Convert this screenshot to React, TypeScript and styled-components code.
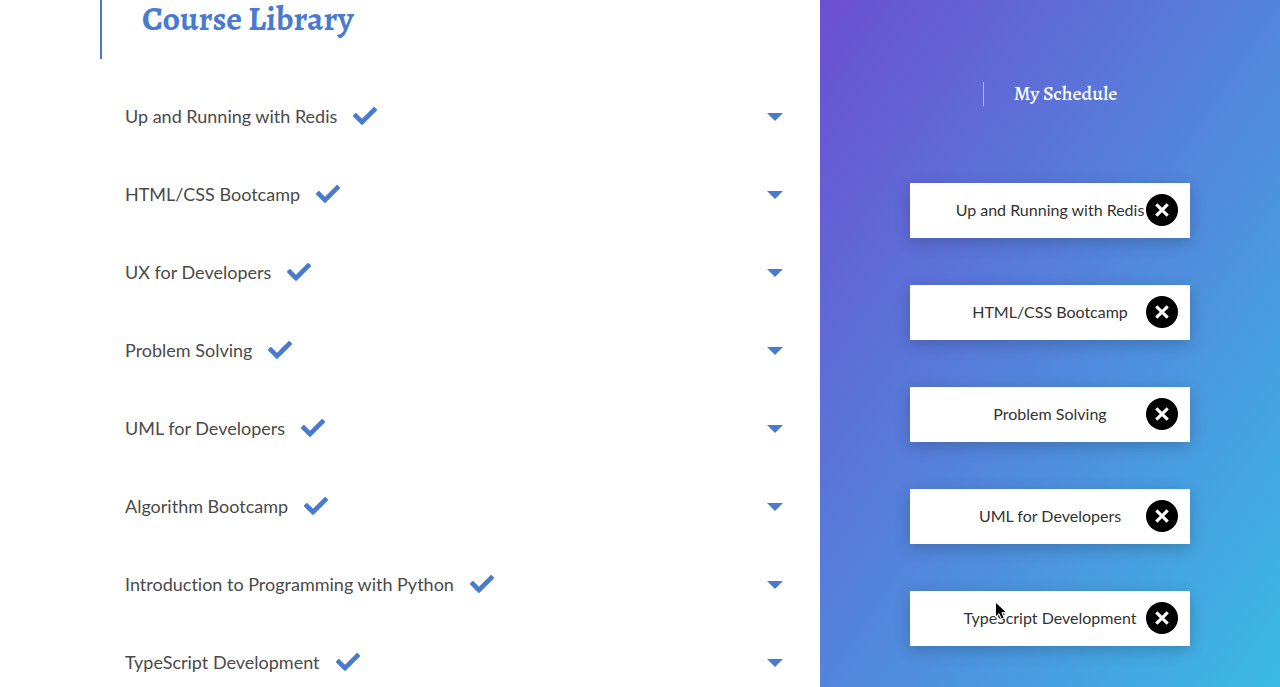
import React from 'react';
import styled, { createGlobalStyle } from 'styled-components';
import { FaCheck } from 'react-icons/fa';

const GlobalStyle = createGlobalStyle`
  *, *::before, *::after { box-sizing: border-box; }
  body {
    margin: 0;
    background: #fff;
    font-family: Lato, "Liberation Sans", sans-serif;
    font-variant-ligatures: none;
    -webkit-font-smoothing: antialiased;
  }
`;

const blue = '#487bd0';
const serif = 'Alegreya, "Liberation Serif", serif';

const Page = styled.div`
  display: grid;
  grid-template-columns: minmax(0, 1fr) 460px;
  height: 100vh;
`;

const Library = styled.main`
  overflow-y: auto;
  scrollbar-width: none;
  padding: 0 36px 0 100px;
`;

const LibraryTitle = styled.h1`
  margin: 0 0 18px;
  padding: 0 0 21px 40px;
  border-left: 2px solid ${blue};
  color: ${blue};
  font: 700 34px/38px ${serif};
`;

const CourseList = styled.ul`
  margin: 0;
  padding: 0 0 0 25px;
  list-style: none;
`;

const CourseRow = styled.li`
  display: flex;
  align-items: center;
  height: 78px;
`;

const CourseName = styled.span`
  color: #4a4a4a;
  font-size: 18px;
  line-height: 24px;
`;

const AddedMark = styled(FaCheck)`
  width: 24px;
  height: 24px;
  margin-left: 16px;
  color: ${blue};
`;

const ExpandButton = styled.button`
  display: flex;
  margin-left: auto;
  padding: 2px 1px 0;
  border: 0;
  background: none;
  cursor: pointer;

  &::after {
    content: '';
    border: 8px solid transparent;
    border-top-color: ${blue};
    border-bottom: 0;
  }
`;

const Schedule = styled.aside`
  display: flex;
  flex-direction: column;
  align-items: center;
  overflow: hidden;
  padding: 82px 20px 0;
  background: linear-gradient(to bottom right, #6c4fd2, #3abae5);
`;

const ScheduleTitle = styled.h2`
  margin: 0 0 77px;
  padding-left: 30px;
  border-left: 1px solid rgba(255, 255, 255, 0.5);
  color: #fff;
  font: 500 20px/24px ${serif};
`;

const ScheduleList = styled.ul`
  display: grid;
  gap: 47px;
  margin: 0;
  padding: 0;
  list-style: none;
`;

const ScheduleCard = styled.li`
  position: relative;
  display: flex;
  align-items: center;
  justify-content: center;
  width: 280px;
  height: 55px;
  padding-bottom: 2px;
  background: #fff;
  box-shadow: 0 4px 15px rgba(0, 0, 0, 0.2);
  color: #333;
  font-size: 16px;
  line-height: 24px;
`;

const RemoveButton = styled.button`
  position: absolute;
  top: 11px;
  right: 12px;
  display: flex;
  padding: 0;
  border: 0;
  border-radius: 50%;
  background: #000;
  cursor: pointer;
`;

const Pointer = styled.svg`
  position: absolute;
  top: 10px;
  left: 84px;
  pointer-events: none;
`;

const courses = [
  'Up and Running with Redis',
  'HTML/CSS Bootcamp',
  'UX for Developers',
  'Problem Solving',
  'UML for Developers',
  'Algorithm Bootcamp',
  'Introduction to Programming with Python',
  'TypeScript Development',
];

const scheduled = [
  'Up and Running with Redis',
  'HTML/CSS Bootcamp',
  'Problem Solving',
  'UML for Developers',
  'TypeScript Development',
];

const hovered = 'TypeScript Development';

export default function App() {
  return (
    <>
      <GlobalStyle />
      <Page>
        <Library>
          <LibraryTitle>Course Library</LibraryTitle>
          <CourseList>
            {courses.map((name) => (
              <CourseRow key={name}>
                <CourseName>{name}</CourseName>
                <AddedMark aria-hidden />
                <ExpandButton type="button" aria-label={`Show details of ${name}`} />
              </CourseRow>
            ))}
          </CourseList>
        </Library>
        <Schedule>
          <ScheduleTitle>My Schedule</ScheduleTitle>
          <ScheduleList>
            {scheduled.map((name) => (
              <ScheduleCard key={name}>
                {name}
                <RemoveButton type="button" aria-label={`Remove ${name}`}>
                  <svg width="32" height="32" viewBox="0 0 32 32" aria-hidden>
                    <path d="M10.3 10.3 21.7 21.7M21.7 10.3 10.3 21.7" stroke="#fff" strokeWidth="3.1" />
                  </svg>
                </RemoveButton>
                {name === hovered && (
                  <Pointer width="16" height="22" viewBox="0 0 16 22" aria-hidden>
                    <path
                      d="M1.5 1v15l3.6-3.3 2.3 5.4 2.8-1.2-2.3-5.2h5z"
                      fill="#000"
                      stroke="#fff"
                      strokeWidth="1"
                    />
                  </Pointer>
                )}
              </ScheduleCard>
            ))}
          </ScheduleList>
        </Schedule>
      </Page>
    </>
  );
}
